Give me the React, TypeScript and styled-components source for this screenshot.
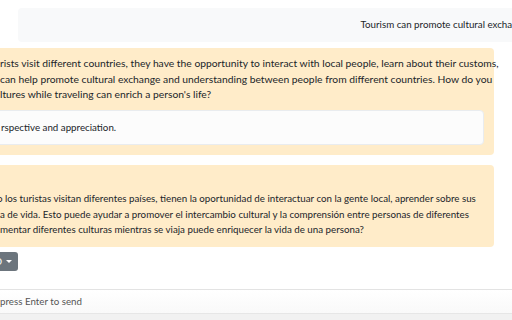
import React from 'react';
import styled, { createGlobalStyle } from 'styled-components';

const GlobalStyle = createGlobalStyle`
  html, body {
    margin: 0;
    padding: 0;
    background: #fff;
    overflow: hidden;
  }
  body {
    font-family: Lato, "Open Sans", sans-serif;
    font-size: 9.75px;
    line-height: 15.5px;
    color: #212529;
  }
`;

const Page = styled.div`
  width: 512px;
  height: 320px;
  display: flex;
  flex-direction: column;
  overflow: hidden;
`;

const Messages = styled.div`
  flex: 1;
  display: flex;
  flex-direction: column;
  align-items: stretch;
  padding: 8px 18px 0 0;
  gap: 6px;
`;

const UserBubble = styled.div`
  margin: 0 -48px 0 18px;
  height: 34px;
  background: #f8f9fa;
  border-radius: 4px;
  display: flex;
  align-items: center;
  justify-content: flex-end;
  padding: 0 12px;
  white-space: nowrap;
`;

const BotBubble = styled.div<{ $label?: boolean }>`
  margin-left: -12px;
  background: #ffecc9;
  border-radius: 4px;
  padding: ${(p) => (p.$label ? '26px' : '8px')} 10px 9px 12px;
  margin-top: ${(p) => (p.$label ? '4px' : '0')};
`;

const Para = styled.p<{ $size?: number; $indent?: number }>`
  margin: 0;
  white-space: nowrap;
  font-size: ${(p) => p.$size ?? 9.75}px;
  text-indent: ${(p) => p.$indent ?? 0}px;
`;

const Answer = styled.div`
  margin: 7px 0 1px -12px;
  padding: 9px 10px 9px 12px;
  background: #fcfcfc;
  border: 1px solid #e9ecef;
  border-radius: 4px;
`;

const Controls = styled.div`
  display: flex;
  margin-top: -1px;
`;

const LangButton = styled.button`
  margin-left: -44px;
  height: 19px;
  padding: 0 6px 0 8px;
  border: none;
  border-radius: 3px;
  background: #6c757d;
  color: #fff;
  font-family: inherit;
  font-size: 9.75px;
  display: flex;
  align-items: center;
  gap: 4px;
`;

const Caret = styled.span`
  width: 0;
  height: 0;
  border-left: 3px solid transparent;
  border-right: 3px solid transparent;
  border-top: 3px solid #fff;
`;

const Footer = styled.div`
  border-top: 1px solid #e3e3e3;
  height: 30px;
  display: flex;
  flex-direction: column;
`;

const Input = styled.div`
  height: 23px;
  display: flex;
  align-items: center;
  color: #555;
  background: linear-gradient(#fff, #f9f9f9);
  border-bottom: 1px solid #e6e6e6;
`;

const FooterStrip = styled.div`
  flex: 1;
  background: #f1f1f1;
`;

export default function App() {
  return (
    <>
      <GlobalStyle />
      <Page>
        <Messages>
          <UserBubble>Tourism can promote cultural exchange.</UserBubble>
          <BotBubble>
            <Para $size={10.3}>
              rists visit different countries, they have the opportunity to interact with local people, learn about their customs,
              <br />
              can help promote cultural exchange and understanding between people from different countries. How do you
              <br />
              ltures while traveling can enrich a person's life?
            </Para>
            <Answer>rspective and appreciation.</Answer>
          </BotBubble>
          <BotBubble $label>
            <Para $indent={-3}>
              o los turistas visitan diferentes países, tienen la oportunidad de interactuar con la gente local, aprender sobre sus
              <br />
              a de vida. Esto puede ayudar a promover el intercambio cultural y la comprensión entre personas de diferentes
              <br />
              mentar diferentes culturas mientras se viaja puede enriquecer la vida de una persona?
            </Para>
          </BotBubble>
          <Controls>
            <LangButton>
              ESPAÑO
              <Caret />
            </LangButton>
          </Controls>
        </Messages>
        <Footer>
          <Input>press Enter to send</Input>
          <FooterStrip />
        </Footer>
      </Page>
    </>
  );
}
